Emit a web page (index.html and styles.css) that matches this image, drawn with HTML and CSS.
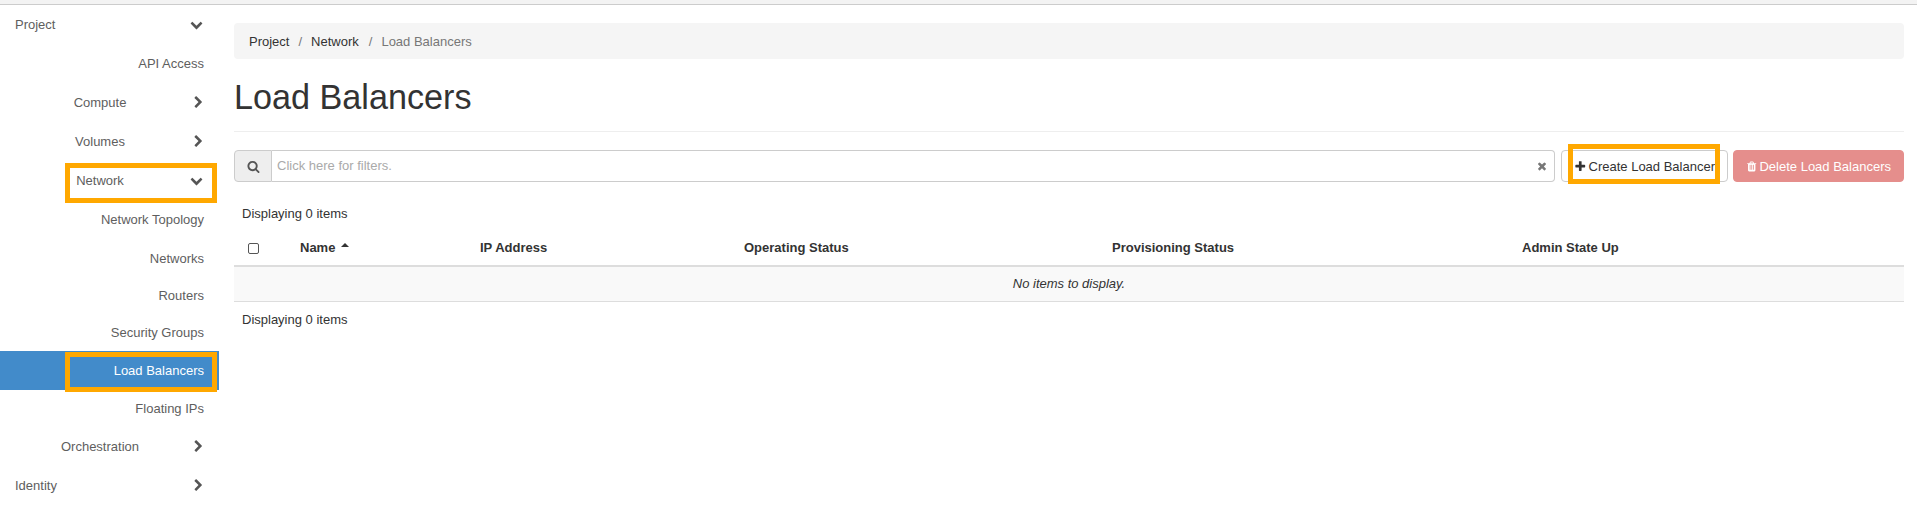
FILE: index.html
```html
<!DOCTYPE html>
<html lang="en">
<head>
    <meta charset="UTF-8">
    <meta name="viewport" content="width=device-width, initial-scale=1.0">
    <title>Load Balancers</title>
    <link rel="stylesheet" href="styles.css">
</head>
<body>
<svg class="icon-defs" xmlns="http://www.w3.org/2000/svg">
    <symbol id="i-down" viewBox="0 0 1792 1792"><path d="M1683 808l-742 741q-19 19-45 19t-45-19l-742-741q-19-19-19-45.5t19-45.5l166-165q19-19 45-19t45 19l531 531 531-531q19-19 45-19t45 19l166 165q19 19 19 45.5t-19 45.5z"/></symbol>
    <symbol id="i-right" viewBox="0 0 1792 1792"><path d="M1363 877l-742 742q-19 19-45 19t-45-19l-166-166q-19-19-19-45t19-45l531-531-531-531q-19-19-19-45t19-45l166-166q19-19 45-19t45 19l742 742q19 19 19 45t-19 45z"/></symbol>
    <symbol id="i-search" viewBox="0 0 1792 1792"><path d="M1216 832q0-185-131.5-316.5t-316.5-131.5-316.5 131.5-131.5 316.5 131.5 316.5 316.5 131.5 316.5-131.5 131.5-316.5zm512 832q0 52-38 90t-90 38q-54 0-90-38l-343-342q-179 124-399 124-143 0-273.5-55.5t-225-150-150-225-55.5-273.5 55.5-273.5 150-225 225-150 273.5-55.5 273.5 55.5 225 150 150 225 55.5 273.5q0 220-124 399l343 343q37 37 37 90z"/></symbol>
    <symbol id="i-times" viewBox="0 0 1792 1792"><path d="M1490 1322q0 40-28 68l-136 136q-28 28-68 28t-68-28l-294-294-294 294q-28 28-68 28t-68-28l-136-136q-28-28-28-68t28-68l294-294-294-294q-28-28-28-68t28-68l136-136q28-28 68-28t68 28l294 294 294-294q28-28 68-28t68 28l136 136q28 28 28 68t-28 68l-294 294 294 294q28 28 28 68z"/></symbol>
    <symbol id="i-plus" viewBox="0 0 1792 1792"><path d="M1600 736v192q0 40-28 68t-68 28h-416v416q0 40-28 68t-68 28h-192q-40 0-68-28t-28-68v-416h-416q-40 0-68-28t-28-68v-192q0-40 28-68t68-28h416v-416q0-40 28-68t68-28h192q40 0 68 28t28 68v416h416q40 0 68 28t28 68z"/></symbol>
    <symbol id="i-trash" viewBox="0 0 1792 1792"><path d="M704 1376v-704q0-14-9-23t-23-9h-64q-14 0-23 9t-9 23v704q0 14 9 23t23 9h64q14 0 23-9t9-23zm256 0v-704q0-14-9-23t-23-9h-64q-14 0-23 9t-9 23v704q0 14 9 23t23 9h64q14 0 23-9t9-23zm256 0v-704q0-14-9-23t-23-9h-64q-14 0-23 9t-9 23v704q0 14 9 23t23 9h64q14 0 23-9t9-23zm-544-992h448l-48-117q-7-9-17-11h-317q-10 2-17 11zm928 32v64q0 14-9 23t-23 9h-96v948q0 83-47 143.5t-113 60.5h-832q-66 0-113-58.5t-47-141.5v-952h-96q-14 0-23-9t-9-23v-64q0-14 9-23t23-9h309l70-167q15-37 54-63t79-26h320q40 0 79 26t54 63l70 167h309q14 0 23 9t9 23z"/></symbol>
</svg>

<div class="top-strip"></div>

<div class="page">
    <nav class="sidebar">
        <a class="nav-row nav-top nav-tall"><span>Project</span><svg class="chev"><use href="#i-down"/></svg></a>
        <a class="nav-row nav-leaf nav-tall"><span>API Access</span></a>
        <a class="nav-row nav-group nav-tall"><span>Compute</span><svg class="chev chev-right"><use href="#i-right"/></svg></a>
        <a class="nav-row nav-group nav-tall"><span>Volumes</span><svg class="chev chev-right"><use href="#i-right"/></svg></a>
        <a class="nav-row nav-group nav-tall"><span>Network</span><svg class="chev"><use href="#i-down"/></svg><i class="mark mark-network"></i></a>
        <a class="nav-row nav-leaf nav-tall"><span>Network Topology</span></a>
        <a class="nav-row nav-leaf nav-mid"><span>Networks</span></a>
        <a class="nav-row nav-leaf"><span>Routers</span></a>
        <a class="nav-row nav-leaf"><span>Security Groups</span></a>
        <a class="nav-row nav-leaf nav-tall active"><span>Load Balancers</span><i class="mark mark-lb"></i></a>
        <a class="nav-row nav-leaf"><span>Floating IPs</span></a>
        <a class="nav-row nav-group nav-tall"><span>Orchestration</span><svg class="chev chev-right"><use href="#i-right"/></svg></a>
        <a class="nav-row nav-top nav-tall"><span>Identity</span><svg class="chev chev-right"><use href="#i-right"/></svg></a>
    </nav>

    <main class="content">
        <div class="breadcrumb">
            <a>Project</a><span class="sep">/</span><a>Network</a><span class="sep sep-last">/</span><span class="current">Load Balancers</span>
        </div>

        <h1 class="page-title">Load Balancers</h1>

        <div class="toolbar">
            <div class="search-group">
                <span class="search-addon"><svg class="ico-search"><use href="#i-search"/></svg></span>
                <div class="search-box">
                    <span class="placeholder">Click here for filters.</span>
                    <svg class="ico-clear"><use href="#i-times"/></svg>
                </div>
            </div>
            <button class="btn btn-create" type="button">
                <svg class="ico-btn"><use href="#i-plus"/></svg>Create Load Balancer
                <i class="mark mark-create"></i>
            </button>
            <button class="btn btn-delete" type="button">
                <svg class="ico-btn"><use href="#i-trash"/></svg>Delete Load Balancers
            </button>
        </div>

        <p class="count count-top">Displaying 0 items</p>

        <table class="lb-table">
            <thead>
                <tr>
                    <th><span class="check"></span></th>
                    <th>Name <span class="sort-up"></span></th>
                    <th>IP Address</th>
                    <th>Operating Status</th>
                    <th>Provisioning Status</th>
                    <th>Admin State Up</th>
                </tr>
            </thead>
            <tbody>
                <tr>
                    <td class="empty" colspan="6">No items to display.</td>
                </tr>
            </tbody>
        </table>

        <p class="count count-bottom">Displaying 0 items</p>
    </main>
</div>
</body>
</html>
```

FILE: styles.css
```css
* {
    box-sizing: border-box;
}
html,
body {
    height: 100%;
}
body {
    margin: 0;
    overflow: hidden;
    background: #fff;
    color: #333;
    font-family: "Liberation Sans", Arial, sans-serif;
    font-size: 13px;
    line-height: 18px;
}
.icon-defs {
    display: none;
}
.top-strip {
    height: 5px;
    background: #f3f3f3;
    border-bottom: 1px solid #ccc;
}
.page {
    display: flex;
    align-items: flex-start;
}

/* sidebar */
.sidebar {
    width: 219px;
    flex: none;
}
.nav-row {
    position: relative;
    display: flex;
    align-items: center;
    height: 37px;
    padding-right: 15px;
    color: #5e5e5e;
}
.nav-mid {
    height: 38px;
}
.nav-tall {
    height: 39px;
}
.nav-row span {
    padding-top: 1px;
}
.nav-top span {
    padding-left: 15px;
    flex: 1;
}
.nav-group span {
    flex: none;
    width: 200px;
    text-align: center;
}
.nav-leaf {
    justify-content: flex-end;
}
.nav-row.active {
    background: #428bca;
    color: #fff;
}
.chev {
    width: 13px;
    height: 13px;
    flex: none;
    fill: #555;
}
.nav-top .chev {
    margin-right: 1px;
}
.nav-group .chev {
    margin-left: -10px;
}
.nav-top .chev-right {
    margin-right: -1px;
}
.nav-group .chev-right {
    margin-left: -8px;
}

/* orange call-out frames */
.mark {
    position: absolute;
    border: 5px solid #ffa800;
    pointer-events: none;
}
.mark-network {
    left: 65px;
    top: 2px;
    width: 152px;
    height: 40px;
}
.mark-lb {
    left: 65px;
    top: 1px;
    width: 152px;
    height: 40px;
}
.mark-create {
    left: 6px;
    top: -7px;
    width: 152px;
    height: 40px;
}

/* main */
.content {
    flex: 1;
    min-width: 0;
    padding: 18px 13px 0 15px;
}
.breadcrumb {
    display: flex;
    align-items: center;
    height: 36px;
    padding: 2px 15px 0;
    background: #f5f5f5;
    border-radius: 4px;
    color: #333;
}
.sep {
    padding: 0 9px;
    color: #777;
}
.sep-last {
    padding-left: 10px;
}
.current {
    color: #777;
}
.page-title {
    margin: 18px 0 0;
    height: 55px;
    font-size: 34.2px;
    font-weight: 500;
    line-height: 40px;
    color: #333;
    border-bottom: 1px solid #eee;
}
.toolbar {
    display: flex;
    margin-top: 18px;
    height: 32px;
}
.search-group {
    flex: 1;
    display: flex;
    min-width: 0;
}
.search-addon {
    display: flex;
    align-items: center;
    justify-content: center;
    width: 38px;
    background: #eee;
    border: 1px solid #ccc;
    border-radius: 4px 0 0 4px;
}
.ico-search {
    width: 13px;
    height: 13px;
    fill: #555;
}
.search-box {
    flex: 1;
    display: flex;
    align-items: center;
    justify-content: space-between;
    padding: 0 6px 0 5px;
    border: 1px solid #ccc;
    border-left: 0;
    border-radius: 0 4px 4px 0;
}
.placeholder {
    color: #aaa;
}
.ico-clear {
    width: 12px;
    height: 12px;
    fill: #777;
}
.btn {
    position: relative;
    display: flex;
    align-items: center;
    height: 32px;
    padding: 0 12px;
    font-family: inherit;
    font-size: 13px;
    border-radius: 4px;
    white-space: nowrap;
}
.btn-create {
    width: 167px;
    margin-left: 6px;
    background: #fff;
    border: 1px solid #ccc;
    color: #333;
}
.btn-delete {
    width: 171px;
    margin-left: 5px;
    background: #e58e8c;
    border: 1px solid #e58e8c;
    color: #fff;
}
.ico-btn {
    width: 13px;
    height: 13px;
    margin-right: 2px;
    fill: currentColor;
}
.count {
    margin: 0;
    padding-left: 8px;
}
.count-top {
    margin-top: 23px;
}
.count-bottom {
    margin-top: 9px;
}
.lb-table {
    width: 100%;
    margin-top: 7px;
    border-collapse: collapse;
    table-layout: fixed;
}
.lb-table th {
    height: 36px;
    padding: 0 0 0 8px;
    text-align: left;
    font-weight: 700;
    border-bottom: 2px solid #ddd;
}
.lb-table th:nth-child(1) { width: 58px; padding-left: 14px; }
.lb-table th:nth-child(2) { width: 180px; }
.lb-table th:nth-child(3) { width: 264px; }
.lb-table th:nth-child(4) { width: 368px; }
.lb-table th:nth-child(5) { width: 410px; }
.check {
    display: block;
    width: 11px;
    height: 11px;
    margin-top: 2px;
    border: 1px solid #555;
    border-radius: 2px;
    background: #fff;
}
.sort-up {
    display: inline-block;
    width: 0;
    height: 0;
    margin-left: 2px;
    vertical-align: 5px;
    border-left: 4px solid transparent;
    border-right: 4px solid transparent;
    border-bottom: 4px solid #333;
}
.empty {
    height: 35px;
    padding: 0;
    text-align: center;
    font-style: italic;
    background: #f9f9f9;
    border-bottom: 1px solid #ddd;
}
```
